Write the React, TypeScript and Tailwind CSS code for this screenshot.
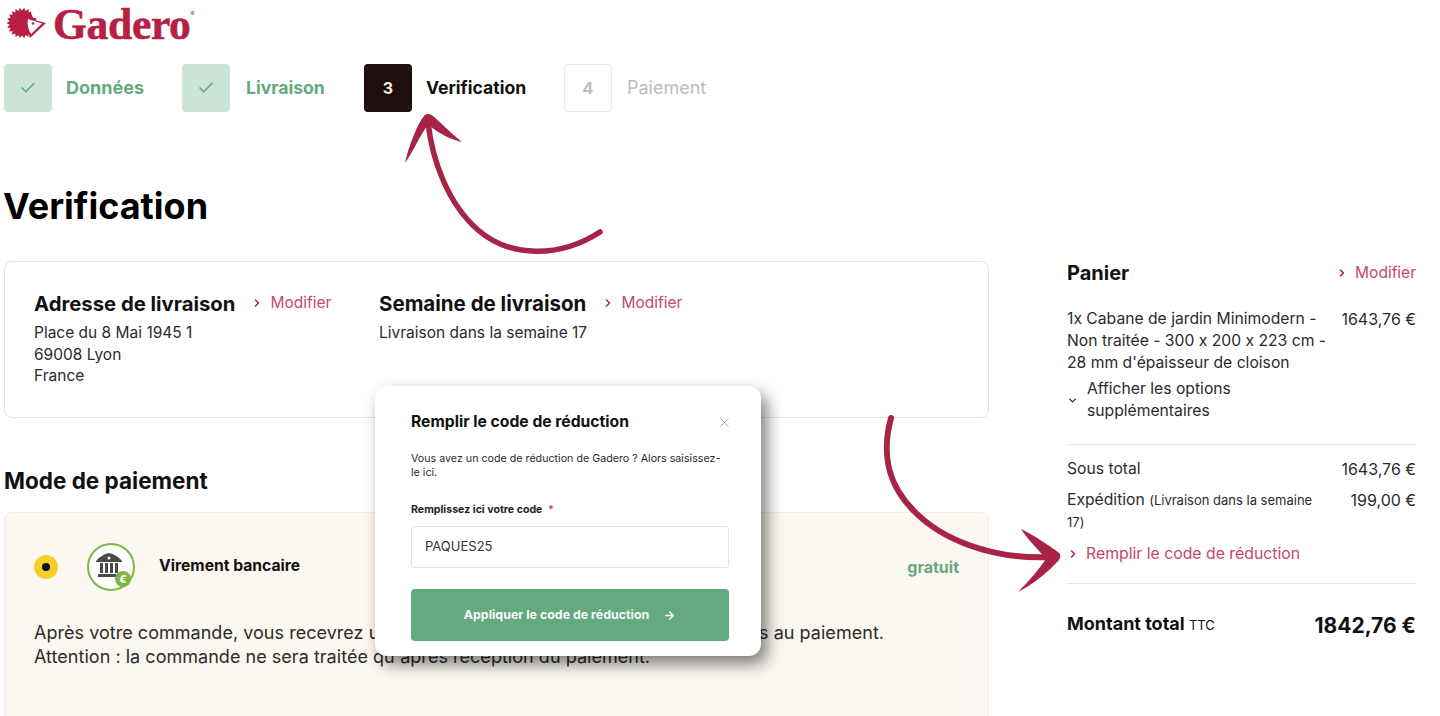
import { ArrowRight, Check, ChevronDown, ChevronRight, X } from "lucide-react";

function ModifyLink({ label = "Modifier", wide = false }: { label?: string; wide?: boolean }) {
  return (
    <a className={wide ? "flex items-center gap-[7px] text-[15.8px] leading-5 text-[#c4476f]" : "flex items-center gap-[7px] text-[15.5px] leading-5 text-[#c4476f]"}>
      <ChevronRight size={12} strokeWidth={3} className="text-[#b81f45]" />
      {label}
    </a>
  );
}

// spiky body of the hedgehog, points alternate between two radii
const spikes = Array.from({ length: 44 }, (_, i) => {
  const a = (i / 44) * Math.PI * 2;
  const r = i % 2 === 0 ? 15.5 : 12.5;
  return `${(16 + Math.cos(a) * r).toFixed(1)},${(16 + Math.sin(a) * r).toFixed(1)}`;
}).join(" ");

function Hedgehog() {
  return (
    <svg width="41" height="32" viewBox="0 0 41 32">
      <polygon fill="#b81f45" points={spikes} />
      <path fill="#b81f45" d="M17 10L40 16L24 31z" />
      <path fill="#fff" d="M22 12L36 16.5L25 27C22 22 21 17 22 12z" />
      <path fill="#fff" d="M24 2L32 6L27 11z" />
      <circle cx="27" cy="16.5" r="1.3" fill="#b81f45" />
    </svg>
  );
}

function BankIcon() {
  return (
    <div className="relative flex h-12 w-12 items-center justify-center rounded-full border-2 border-[#7cb644] bg-white">
      <svg width="28" height="26" viewBox="0 0 28 26" className="-mt-1 -ml-1">
        <path fill="#4a4a4a" d="M14 1C9 2 4 5 1 9v1h26V9C24 5 19 2 14 1zM3 22h22v3H3z" />
        <path fill="#4a4a4a" d="M5 11h3v10H5zM10 11h3v10h-3zM15 11h3v10h-3zM20 11h3v10h-3z" />
        <circle cx="14" cy="6" r="1.5" fill="#fff" />
      </svg>
      <span className="absolute right-[2px] bottom-[2px] flex h-4 w-4 items-center justify-center rounded-full bg-[#7cb644] text-[11px] leading-none font-bold text-white">
        €
      </span>
    </div>
  );
}

function DoneStep({ label, wide = false }: { label: string; wide?: boolean }) {
  return (
    <div className={wide ? "flex items-center gap-[14px]" : "flex items-center gap-4"}>
      <div className="flex h-12 w-12 items-center justify-center rounded bg-[#cce3d7]">
        <Check size={18} strokeWidth={2.25} className="text-[#64a980]" />
      </div>
      <span className={wide ? "text-lg font-bold text-[#64a980]" : "text-[17.6px] font-bold text-[#64a980]"}>{label}</span>
    </div>
  );
}

export default function App() {
  return (
    <div
      className="relative h-[716px] w-[1440px] overflow-hidden bg-white text-[#2b2b2b] [font-feature-settings:'calt'_0]"
      style={{ fontFamily: "Inter, 'Noto Sans', sans-serif" }}
    >
      <div className="flex h-12 items-start pt-[7px] pl-[6px]">
        <Hedgehog />
        <span
          className="ml-[6px] text-[43.5px] leading-[34px] font-bold tracking-[-0.3px] text-[#b81f45] [-webkit-text-stroke:0.6px_#b81f45]"
          style={{ fontFamily: "'Liberation Serif', serif" }}
        >
          Gadero
        </span>
        <span className="mt-[2px] text-[6px] text-[#b81f45]">®</span>
      </div>

      <div className="mt-4 flex h-12 items-center pl-1">
        <div className="w-[178px]">
          <DoneStep label="Données" wide />
        </div>
        <div className="w-[182px]">
          <DoneStep label="Livraison" />
        </div>
        <div className="flex w-[200px] items-center gap-[14px]">
          <div className="flex h-12 w-12 items-center justify-center rounded bg-[#1e0f10] text-base font-bold text-[#f3e7df]">
            3
          </div>
          <span className="text-[17.6px] font-bold text-[#111]">Verification</span>
        </div>
        <div className="flex items-center gap-[15px]">
          <div className="flex h-12 w-12 items-center justify-center rounded border border-[#e8e8e8] text-base font-bold text-[#bdbdbd]">
            4
          </div>
          <span className="text-lg text-[#bdbdbd]">Paiement</span>
        </div>
      </div>

      <div className="flex pl-1">
        <div className="w-[985px] shrink-0">
          <h1 className="mt-[70px] -ml-px text-[36px] leading-[48px] font-bold text-black">Verification</h1>

          <div className="mt-[31px] flex h-[157px] rounded-lg border border-[#e4e4e4] pt-[30px] pl-[29px]">
            <div className="w-[345px]">
              <div className="flex items-center">
                <h2 className="text-[20.3px] leading-6 font-bold text-[#111]">Adresse de livraison</h2>
                <span className="-mt-[2px] ml-4">
                  <ModifyLink />
                </span>
              </div>
              <p className="mt-[6px] text-[15.5px] leading-[21.5px]">
                Place du 8 Mai 1945 1<br />
                69008 Lyon
                <br />
                France
              </p>
            </div>
            <div>
              <div className="flex items-center">
                <h2 className="text-[20.5px] leading-6 font-bold text-[#111]">Semaine de livraison</h2>
                <span className="-mt-[2px] ml-4">
                  <ModifyLink />
                </span>
              </div>
              <p className="mt-[6px] text-[15.5px] leading-[21.5px]">Livraison dans la semaine 17</p>
            </div>
          </div>

          <h2 className="mt-[49px] text-[22.5px] leading-7 font-bold text-[#111]">Mode de paiement</h2>

          <div className="mt-[17px] h-[260px] rounded-lg border border-[#f1ece6] bg-[#fdf7f1] px-[29px] pt-[30px]">
            <div className="flex items-center">
              <div className="flex h-6 w-6 items-center justify-center rounded-full bg-[#f6cf2f]">
                <div className="h-2 w-2 rounded-full bg-[#111]" />
              </div>
              <div className="ml-[29px]">
                <BankIcon />
              </div>
              <span className="-mt-[2px] ml-6 text-[15.7px] font-bold text-[#111]">Virement bancaire</span>
              <span className="mr-0 ml-auto text-base font-bold text-[#64a980]">gratuit</span>
            </div>
            <p className="mt-[30px] text-[18px] leading-6 tracking-[0.03px]">
              Après votre commande, vous recevrez un mail contenant les informations nécessaires au paiement.
              <br />
              Attention : la commande ne sera traitée qu'après réception du paiement.
            </p>
          </div>
        </div>

        <aside className="mt-[149px] ml-[78px] w-[349px] shrink-0 text-[15.7px] leading-[22px]">
          <div className="flex items-center justify-between">
            <h2 className="text-xl leading-6 font-bold text-[#111]">Panier</h2>
            <ModifyLink />
          </div>
          <div className="mt-[23px] flex justify-between">
            <p className="w-[262px]">1x Cabane de jardin Minimodern - Non traitée - 300 x 200 x 223 cm - 28 mm d'épaisseur de cloison</p>
            <span className="text-[16px]">1643,76 €</span>
          </div>
          <div className="mt-[4px] flex items-center">
            <ChevronDown size={11} strokeWidth={3} className="shrink-0" />
            <span className="ml-[9px] w-[200px]">Afficher les options supplémentaires</span>
          </div>
          <div className="mt-[22px] border-t border-[#e4e4e4] pt-[13px]">
            <div className="flex justify-between">
              <span>Sous total</span>
              <span className="text-[16px]">1643,76 €</span>
            </div>
            <div className="mt-[9px] flex justify-between">
              <p className="w-[255px]">
                Expédition <span className="text-[13px]">(Livraison dans la semaine 17)</span>
              </p>
              <span className="text-[16px]">199,00 €</span>
            </div>
            <div className="mt-[11px]">
              <ModifyLink label="Remplir le code de réduction" wide />
            </div>
          </div>
          <div className="mt-[19px] flex items-center justify-between border-t border-[#e4e4e4] pt-[26px]">
            <span className="text-lg font-bold text-[#111]">
              Montant total <span className="text-[13px] font-normal">TTC</span>
            </span>
            <span className="mt-[3px] text-[21px] font-bold text-[#111]">1842,76 €</span>
          </div>
        </aside>
      </div>

      {/* modal */}
      <div className="absolute top-[386px] left-[375px] h-[270px] w-[386px] rounded-xl bg-white pt-[25px] pr-8 pl-9 shadow-[6px_8px_16px_rgba(0,0,0,0.5)]">
        <div className="flex items-center justify-between">
          <h3 className="text-[15.7px] leading-[22px] font-bold text-[#111]">Remplir le code de réduction</h3>
          <X size={15} strokeWidth={1.25} className="mr-[-3px] text-[#999]" />
        </div>
        <p className="mt-[19px] text-[10.7px] leading-[14px]">
          Vous avez un code de réduction de Gadero ? Alors saisissez-le ici.
        </p>
        <p className="mt-[22px] text-[10.6px] leading-4 font-bold text-[#222]">
          Remplissez ici votre code <span className="ml-[3px] text-[#c4476f]">*</span>
        </p>
        <div className="mt-2 flex h-[42px] items-center rounded-[3px] border border-[#f0dfd2] px-[13px] text-[13px] text-[#333]">
          PAQUES25
        </div>
        <button className="mt-[21px] flex h-[52px] w-full items-center justify-center gap-[14px] rounded-[4px] bg-[#64a980] text-[12.4px] font-bold text-[#f5fbf7]">
          Appliquer le code de réduction
          <ArrowRight size={13} strokeWidth={2.5} />
        </button>
      </div>

      {/* arrows */}
      <svg className="pointer-events-none absolute top-0 left-0" width="1440" height="716" viewBox="0 0 1440 716">
        <path
          d="M600 232C560 258 510 258 478 230C448 204 432 160 428 122"
          fill="none"
          stroke="#a72447"
          strokeWidth="5.5"
          strokeLinecap="round"
        />
        <path d="M405 163C409 145 417 125 424 116C427 113 430 114 433 116C442 124 452 134 462 142C452 140 440 134 431 127C428 125 427 126 425 129C418 140 411 155 405 163z" fill="#a72447" />
        <path
          d="M891 418C881 455 888 485 914 511C940 538 990 560 1050 557"
          fill="none"
          stroke="#a72447"
          strokeWidth="6"
          strokeLinecap="round"
        />
        <path d="M1021 529C1034 535 1048 545 1058 552C1061 554 1061 557 1059 560C1048 572 1034 584 1018 592C1028 582 1040 568 1046 559C1038 549 1028 540 1021 529z" fill="#a72447" />
      </svg>
    </div>
  );
}
